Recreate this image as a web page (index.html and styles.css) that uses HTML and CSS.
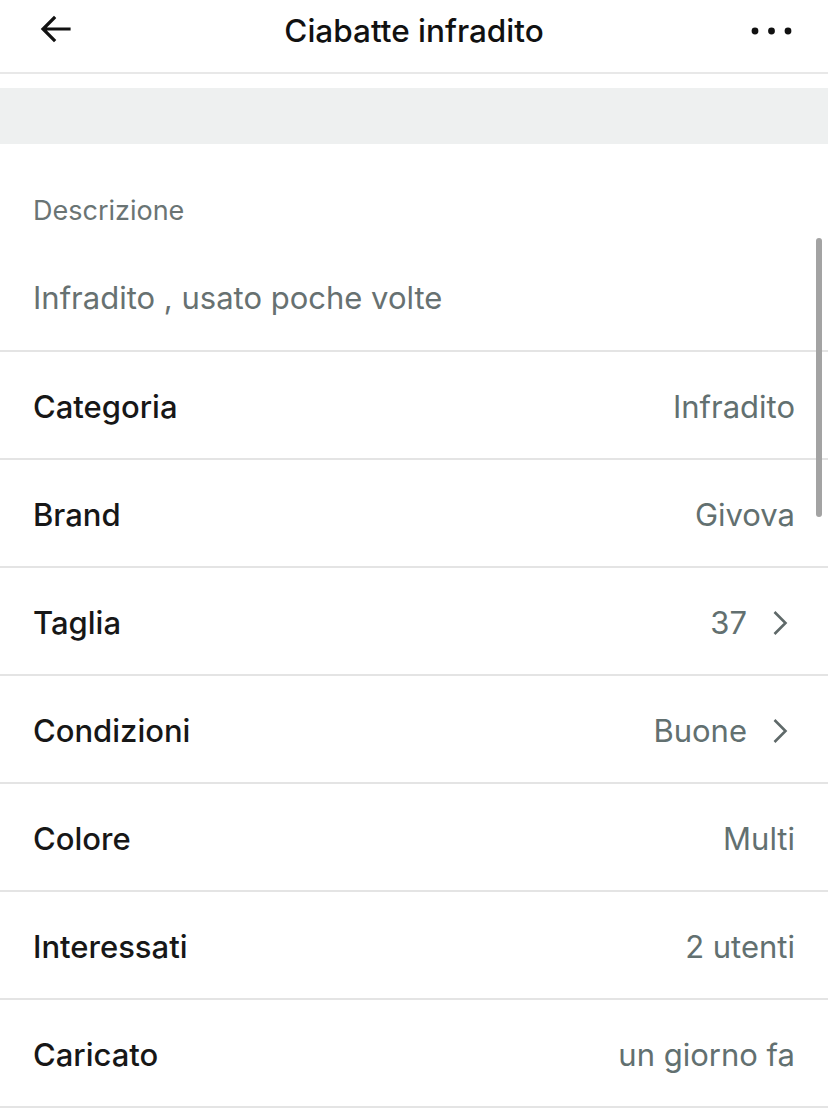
FILE: index.html
```html
<!DOCTYPE html>
<html lang="it">
<head>
<meta charset="utf-8">
<title>Ciabatte infradito</title>
<link rel="stylesheet" href="styles.css">
</head>
<body>
<div class="page">
  <header class="topbar">
    <button class="icon-btn back" aria-label="Indietro">
      <svg width="34" height="34" viewBox="0 0 34 34"><path d="M31 15H6M16 4L5 15l11 11" fill="none" stroke="#111" stroke-width="3.2" stroke-linecap="square" stroke-linejoin="miter"/></svg>
    </button>
    <h1 class="title">Ciabatte infradito</h1>
    <button class="icon-btn more" aria-label="Altro">
      <svg width="44" height="10" viewBox="0 0 44 10"><circle cx="5" cy="5" r="3.4" fill="#111"/><circle cx="21.5" cy="5" r="3.4" fill="#111"/><circle cx="38" cy="5" r="3.4" fill="#111"/></svg>
    </button>
  </header>
  <div class="gap"></div>
  <div class="band"></div>
  <section class="desc">
    <div class="desc-label">Descrizione</div>
    <div class="desc-text">Infradito , usato poche volte</div>
  </section>
  <ul class="details">
    <li class="row"><span class="key">Categoria</span><span class="val">Infradito</span></li>
    <li class="row"><span class="key">Brand</span><span class="val">Givova</span></li>
    <li class="row"><span class="key">Taglia</span><span class="val">37<svg class="chev" width="16" height="26" viewBox="0 0 16 26"><path d="M2.5 2L13.5 13L2.5 24" fill="none" stroke="#5f6969" stroke-width="2.6"/></svg></span></li>
    <li class="row"><span class="key">Condizioni</span><span class="val">Buone<svg class="chev" width="16" height="26" viewBox="0 0 16 26"><path d="M2.5 2L13.5 13L2.5 24" fill="none" stroke="#5f6969" stroke-width="2.6"/></svg></span></li>
    <li class="row"><span class="key">Colore</span><span class="val">Multi</span></li>
    <li class="row"><span class="key">Interessati</span><span class="val">2 utenti</span></li>
    <li class="row"><span class="key">Caricato</span><span class="val">un giorno fa</span></li>
  </ul>
  <div class="scrollbar"></div>
</div>
</body>
</html>
```
FILE: styles.css
```css
* { box-sizing: border-box; }
html, body { margin: 0; padding: 0; background: #fff; }
body { font-family: Inter, "Noto Sans", sans-serif; color: #171717; }
.page { position: relative; width: 828px; height: 1108px; overflow: hidden; }

.topbar {
  height: 74px;
  display: grid;
  grid-template-columns: 1fr auto 1fr;
  align-items: center;
  padding: 0 34px 11px 38px;
  border-bottom: 2px solid #e8e8e8;
}
.icon-btn { background: none; border: 0; padding: 0; display: flex; align-items: center; }
.back { justify-self: start; }
.more { justify-self: end; }
.back svg { display: block; }
.title { margin: 0; font-size: 31.5px; line-height: 36px; font-weight: 500; color: #111; letter-spacing: 0; transform: translateX(-2px); }

.gap { height: 14px; }
.band { height: 56px; background: #eef0f0; }

.desc {
  padding: 51px 33px 34px;
  border-bottom: 2px solid #e4e4e4;
}
.desc-label { font-size: 27px; line-height: 32px; color: #6a7474; }
.desc-text { margin-top: 53px; font-size: 31px; line-height: 36px; color: #677171; }

.details { list-style: none; margin: 0; padding: 0; }
.row {
  height: 108px;
  display: flex;
  align-items: center;
  justify-content: space-between;
  padding: 4px 33px 0;
  border-bottom: 2px solid #e4e4e4;
}
.key { font-size: 31px; line-height: 36px; font-weight: 500; color: #171717; }
.val { font-size: 31px; line-height: 36px; color: #627070; display: flex; align-items: center; }
.chev { margin-left: 25px; margin-right: 7px; }

.scrollbar {
  position: absolute;
  left: 816px;
  top: 238px;
  width: 6px;
  height: 279px;
  border-radius: 3px;
  background: #a3a3a3;
}
```
